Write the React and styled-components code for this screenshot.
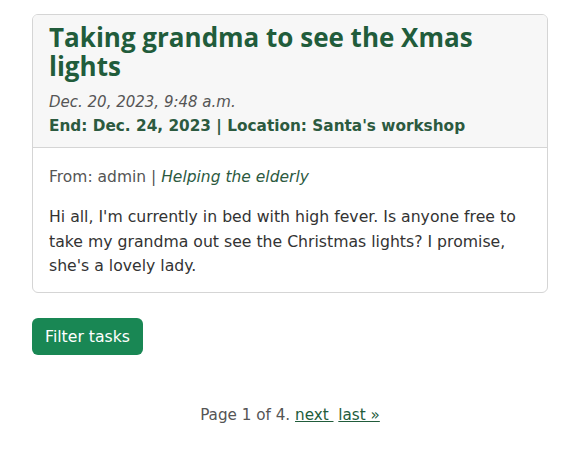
import React from 'react'
import styled, { createGlobalStyle } from 'styled-components'

const Global = createGlobalStyle`
  body {
    margin: 0;
    background: #fff;
    font-family: 'DejaVu Sans', 'Open Sans', sans-serif;
    color: #333;
  }
`

const Page = styled.div`
  padding: 14px 26px 0 32px;
`

const Card = styled.div`
  border: 1px solid #d5d5d5;
  border-radius: 6px;
  overflow: hidden;
`

const CardHeader = styled.div`
  background: #f7f7f7;
  border-bottom: 1px solid #d5d5d5;
  padding: 8px 16px 8px 16px;
`

const Title = styled.h4`
  margin: 0 0 10px 0;
  font-family: 'Open Sans', sans-serif;
  font-weight: 700;
  font-size: 26px;
  line-height: 29px;
  color: #215c3b;
`

const Posted = styled.div`
  font-style: italic;
  font-size: 15px;
  line-height: 23px;
  color: #555;
`

const Meta = styled.div`
  font-weight: 700;
  font-size: 15.3px;
  line-height: 25px;
  color: #2c5a3f;
`

const CardBody = styled.div`
  padding: 17px 16px 13px 16px;
`

const From = styled.p`
  margin: 0 0 16px 0;
  font-size: 15.5px;
  line-height: 24px;
  color: #555;

  em {
    color: #2c5a3f;
  }
`

const Text = styled.p`
  margin: 0;
  font-size: 15.7px;
  line-height: 24.5px;
  color: #333;
`

const Button = styled.button`
  margin-top: 25px;
  background: #198754;
  color: #fff;
  border: none;
  border-radius: 6px;
  padding: 0 13px;
  height: 37px;
  font-family: inherit;
  font-size: 15.7px;
`

const Pager = styled.div`
  margin-top: 51px;
  text-align: center;
  font-size: 15.2px;
  color: #555;

  a {
    color: #215c3b;
    text-decoration: underline;
  }
`

export default function App() {
  return (
    <Page>
      <Global />
      <Card>
        <CardHeader>
          <Title>Taking grandma to see the Xmas lights</Title>
          <Posted>Dec. 20, 2023, 9:48 a.m.</Posted>
          <Meta>End: Dec. 24, 2023 | Location: Santa's workshop</Meta>
        </CardHeader>
        <CardBody>
          <From>
            From: admin | <em>Helping the elderly</em>
          </From>
          <Text>
            Hi all, I'm currently in bed with high fever. Is anyone free to take my grandma out
            see the Christmas lights? I promise, she's a lovely lady.
          </Text>
        </CardBody>
      </Card>
      <Button>Filter tasks</Button>
      <Pager>
        Page 1 of 4. <a href="#">next&nbsp;</a> <a href="#">last &raquo;</a>
      </Pager>
    </Page>
  )
}
